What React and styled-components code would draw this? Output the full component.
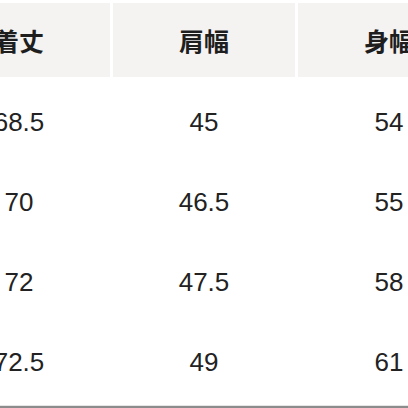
import React from "react";
import styled, { createGlobalStyle } from "styled-components";

const columns = ["着丈", "肩幅", "身幅"];

const rows = [
  ["68.5", "45", "54"],
  ["70", "46.5", "55"],
  ["72", "47.5", "58"],
  ["72.5", "49", "61"],
];

const GlobalStyle = createGlobalStyle`
  html, body {
    margin: 0;
    padding: 0;
    background: #ffffff;
  }
`;

const Viewport = styled.div`
  width: 408px;
  height: 408px;
  overflow: hidden;
  background: #ffffff;
  position: relative;
`;

const Table = styled.div`
  display: grid;
  grid-template-columns: repeat(3, 182px);
  column-gap: 3px;
  margin-left: -72px;
  padding-top: 3px;
  width: max-content;
`;

const HeaderCell = styled.div`
  height: 74px;
  margin-bottom: 5px;
  background: #f4f3f2;
  display: flex;
  align-items: center;
  justify-content: center;
  font-family: "Noto Sans CJK JP", "Noto Sans", sans-serif;
  font-size: 25px;
  font-weight: 700;
  color: #1e1e1e;
`;

const Cell = styled.div`
  height: 80px;
  display: flex;
  align-items: center;
  justify-content: center;
  font-family: "Liberation Sans", Arial, sans-serif;
  font-size: 26px;
  font-weight: 400;
  color: #222222;
`;

const BottomLine = styled.div`
  position: absolute;
  left: 0;
  right: 0;
  bottom: 0;
  height: 2px;
  background: #8c8c8c;
  border-top: 1px solid #e6e6e6;
`;

export default function App() {
  return (
    <>
      <GlobalStyle />
      <Viewport>
        <Table>
          {columns.map((c) => (
            <HeaderCell key={c}>{c}</HeaderCell>
          ))}
          {rows.map((r, i) =>
            r.map((v, j) => <Cell key={`${i}-${j}`}>{v}</Cell>)
          )}
        </Table>
        <BottomLine />
      </Viewport>
    </>
  );
}
